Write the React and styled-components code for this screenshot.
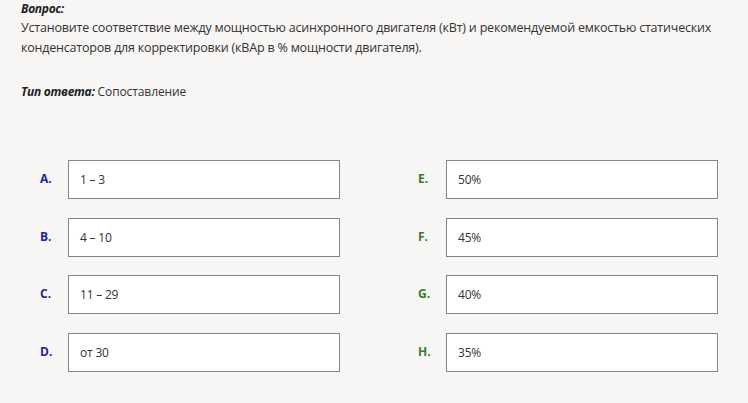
import React from "react";
import styled, { createGlobalStyle } from "styled-components";

const Global = createGlobalStyle`
  html, body { margin: 0; padding: 0; background: #f7f6f5; }
  body { font-family: "Open Sans", "Noto Sans", sans-serif; color: #333; }
`;

const Page = styled.div`
  width: 748px;
  height: 403px;
  box-sizing: border-box;
  padding: 1px 0 0 21px;
  background: #f7f6f5;
  overflow: hidden;
`;

const Heading = styled.div`
  font-size: 12px;
  font-weight: 700;
  font-style: italic;
  line-height: 16px;
  color: #222;
  letter-spacing: -0.3px;
`;

const Question = styled.p`
  margin: 1px 0 0;
  font-size: 12.5px;
  line-height: 20px;
  color: #333;
  width: 720px;
  letter-spacing: -0.2px;
`;

const TypeLine = styled.div`
  margin-top: 26px;
  font-size: 12px;
  line-height: 16px;
  color: #333;
  letter-spacing: -0.1px;
`;

const TypeLabel = styled.span`
  font-weight: 700;
  font-style: italic;
  color: #222;
  letter-spacing: -0.3px;
`;

const Grid = styled.div`
  margin-top: 60px;
  margin-left: 19px;
  display: grid;
  grid-template-columns: 378px 300px;
  grid-auto-flow: column;
  grid-template-rows: repeat(4, 39px);
  row-gap: 18.67px;
`;

const Item = styled.div`
  display: flex;
  align-items: center;
`;

const Letter = styled.span`
  width: 28px;
  font-size: 12px;
  font-weight: 700;
  color: ${(p) => p.$color};
  margin-top: -2px;
`;

const Box = styled.div`
  box-sizing: border-box;
  width: 272px;
  height: 39px;
  background: #fff;
  border: 1px solid #858585;
  padding: 0 11px;
  display: flex;
  align-items: center;
  font-size: 12px;
  color: #333;
  letter-spacing: -0.2px;
`;

const left = [
  ["A.", "1 – 3"],
  ["B.", "4 – 10"],
  ["C.", "11 – 29"],
  ["D.", "от 30"],
];
const right = [
  ["E.", "50%"],
  ["F.", "45%"],
  ["G.", "40%"],
  ["H.", "35%"],
];

export default function App() {
  return (
    <Page>
      <Global />
      <Heading>Вопрос:</Heading>
      <Question>
        Установите соответствие между мощностью асинхронного двигателя (кВт) и
        рекомендуемой емкостью статических конденсаторов для корректировки (кВАр
        в % мощности двигателя).
      </Question>
      <TypeLine>
        <TypeLabel>Тип ответа:</TypeLabel> Сопоставление
      </TypeLine>
      <Grid>
        {left.map(([l, t]) => (
          <Item key={l}>
            <Letter $color="#1e1ea6">{l}</Letter>
            <Box>{t}</Box>
          </Item>
        ))}
        {right.map(([l, t]) => (
          <Item key={l}>
            <Letter $color="#3b7a28">{l}</Letter>
            <Box>{t}</Box>
          </Item>
        ))}
      </Grid>
    </Page>
  );
}
